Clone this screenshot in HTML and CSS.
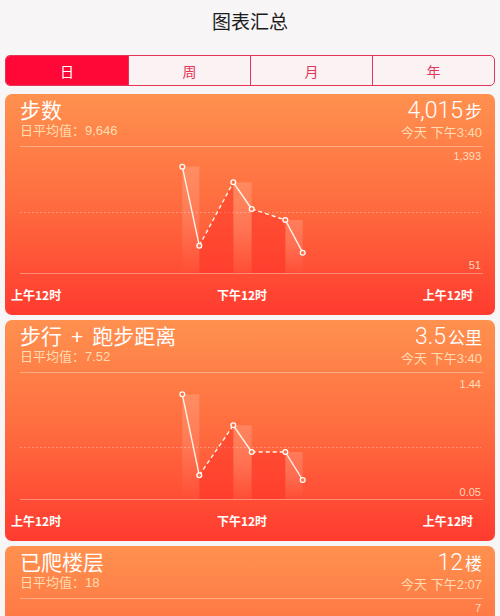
FILE: index.html
```html
<!DOCTYPE html>
<html lang="zh">
<head>
<meta charset="utf-8">
<title>图表汇总</title>
<link rel="stylesheet" href="styles.css">
</head>
<body>
<header class="topbar"><h1 class="title">图表汇总</h1></header>
<nav class="seg">
  <span class="seg-item active">日</span>
  <span class="seg-item">周</span>
  <span class="seg-item">月</span>
  <span class="seg-item">年</span>
</nav>
<main class="cards">
  <section class="card">
    <div class="card-head">
      <div class="head-left">
        <div class="card-title">步数</div>
        <div class="card-sub">日平均值：9,646</div>
      </div>
      <div class="head-right">
        <div class="card-value"><span class="num">4,015</span><span class="unit">步</span></div>
        <div class="card-sub">今天 下午3:40</div>
      </div>
    </div>
    <svg class="chart" width="490" height="128" viewBox="0 0 490 128">
      <defs>
        <linearGradient id="lg1" x1="0" y1="0" x2="0" y2="1">
          <stop offset="0" stop-color="#fff" stop-opacity="0.16"/>
          <stop offset="0.5" stop-color="#fff" stop-opacity="0.12"/>
          <stop offset="1" stop-color="#fff" stop-opacity="0"/>
        </linearGradient>
      </defs>
      <line class="rule" x1="15" y1="0.5" x2="478" y2="0.5"/>
      <line class="avg" x1="15" y1="66.5" x2="476" y2="66.5"/>
      <line class="rule" x1="15" y1="127.5" x2="478" y2="127.5"/>
      <rect x="177.3" y="20.7" width="17" height="107" fill="url(#lg1)"/>
      <rect x="228.3" y="36.3" width="18.4" height="91" fill="url(#lg1)"/>
      <rect x="280.3" y="74" width="17.4" height="53" fill="url(#lg1)"/>
      <polygon class="dark" points="194.3,99.7 228.3,36.3 228.3,127 194.3,127"/>
      <polygon class="dark" points="246.7,63 280.3,74 280.3,127 246.7,127"/>
      <line class="solid" x1="177.3" y1="20.7" x2="194.3" y2="99.7"/>
      <line class="dash" x1="194.3" y1="99.7" x2="228.3" y2="36.3"/>
      <line class="solid" x1="228.3" y1="36.3" x2="246.7" y2="63"/>
      <line class="dash" x1="246.7" y1="63" x2="280.3" y2="74"/>
      <line class="solid" x1="280.3" y1="74" x2="297.7" y2="106.7"/>
      <circle class="pt" cx="177.3" cy="20.7" r="2.4"/>
      <circle class="pt" cx="194.3" cy="99.7" r="2.4"/>
      <circle class="pt" cx="228.3" cy="36.3" r="2.4"/>
      <circle class="pt" cx="246.7" cy="63" r="2.4"/>
      <circle class="pt" cx="280.3" cy="74" r="2.4"/>
      <circle class="pt" cx="297.7" cy="106.7" r="2.4"/>
      <text class="lim" x="476" y="14">1,393</text>
      <text class="lim" x="476" y="123">51</text>
    </svg>
    <div class="axis"><span>上午12时</span><span>下午12时</span><span>上午12时</span></div>
  </section>

  <section class="card">
    <div class="card-head">
      <div class="head-left">
        <div class="card-title">步行<span class="plus">+</span>跑步距离</div>
        <div class="card-sub">日平均值：7.52</div>
      </div>
      <div class="head-right">
        <div class="card-value"><span class="num">3.5</span><span class="unit">公里</span></div>
        <div class="card-sub">今天 下午3:40</div>
      </div>
    </div>
    <svg class="chart" width="490" height="128" viewBox="0 0 490 128">
      <defs>
        <linearGradient id="lg2" x1="0" y1="0" x2="0" y2="1">
          <stop offset="0" stop-color="#fff" stop-opacity="0.16"/>
          <stop offset="0.5" stop-color="#fff" stop-opacity="0.12"/>
          <stop offset="1" stop-color="#fff" stop-opacity="0"/>
        </linearGradient>
      </defs>
      <line class="rule" x1="15" y1="0.5" x2="478" y2="0.5"/>
      <line class="avg" x1="15" y1="75.5" x2="476" y2="75.5"/>
      <line class="rule" x1="15" y1="127.5" x2="478" y2="127.5"/>
      <rect x="177.3" y="22.3" width="17" height="105" fill="url(#lg2)"/>
      <rect x="228.3" y="53.3" width="18.4" height="74" fill="url(#lg2)"/>
      <rect x="280.3" y="80" width="17.4" height="47" fill="url(#lg2)"/>
      <polygon class="dark" points="194.3,103.3 228.3,53.3 228.3,127 194.3,127"/>
      <polygon class="dark" points="246.7,80 280.3,80 280.3,127 246.7,127"/>
      <line class="solid" x1="177.3" y1="22.3" x2="194.3" y2="103.3"/>
      <line class="dash" x1="194.3" y1="103.3" x2="228.3" y2="53.3"/>
      <line class="solid" x1="228.3" y1="53.3" x2="246.7" y2="80"/>
      <line class="dash" x1="246.7" y1="80" x2="280.3" y2="80"/>
      <line class="solid" x1="280.3" y1="80" x2="297.7" y2="108"/>
      <circle class="pt" cx="177.3" cy="22.3" r="2.4"/>
      <circle class="pt" cx="194.3" cy="103.3" r="2.4"/>
      <circle class="pt" cx="228.3" cy="53.3" r="2.4"/>
      <circle class="pt" cx="246.7" cy="80" r="2.4"/>
      <circle class="pt" cx="280.3" cy="80" r="2.4"/>
      <circle class="pt" cx="297.7" cy="108" r="2.4"/>
      <text class="lim" x="476" y="16">1.44</text>
      <text class="lim" x="476" y="124">0.05</text>
    </svg>
    <div class="axis"><span>上午12时</span><span>下午12时</span><span>上午12时</span></div>
  </section>

  <section class="card">
    <div class="card-head">
      <div class="head-left">
        <div class="card-title">已爬楼层</div>
        <div class="card-sub">日平均值：18</div>
      </div>
      <div class="head-right">
        <div class="card-value"><span class="num">12</span><span class="unit">楼</span></div>
        <div class="card-sub">今天 下午2:07</div>
      </div>
    </div>
    <svg class="chart" width="490" height="128" viewBox="0 0 490 128">
      <line class="rule" x1="15" y1="0.5" x2="478" y2="0.5"/>
      <text class="lim" x="476" y="14">7</text>
    </svg>
  </section>
</main>
</body>
</html>
```

FILE: styles.css
```css
html, body {
  margin: 0;
  padding: 0;
  height: 616px;
  overflow: hidden;
}

body {
  background: #f7f5f5;
  font-family: "Noto Sans CJK SC", "Noto Sans", sans-serif;
}

.topbar {
  height: 55px;
}

.title {
  margin: 0;
  line-height: 42px;
  font-size: 19px;
  font-weight: 400;
  color: #1c1c1c;
  text-align: center;
}

.seg {
  display: grid;
  grid-template-columns: repeat(4, 1fr);
  height: 31px;
  margin: 0 5px;
  box-sizing: border-box;
  border: 1px solid #e3345a;
  border-radius: 5px;
  overflow: hidden;
  background: #fbf3f3;
}

.seg-item {
  display: flex;
  align-items: center;
  justify-content: center;
  font-size: 14px;
  color: #e3345a;
  border-left: 1px solid #e3345a;
}

.seg-item:first-child {
  border-left: none;
}

.seg-item.active {
  background: #ff0838;
  color: #fff;
}

.cards {
  display: flex;
  flex-direction: column;
  gap: 5px;
  padding: 8px 5px 0;
}

.card {
  flex-shrink: 0;
  height: 221px;
  border-radius: 7px;
  overflow: hidden;
  color: #fff;
  background: linear-gradient(180deg, #ff914f 0%, #ff6c3f 50%, #ff3b2f 100%);
}

.card-head {
  display: flex;
  justify-content: space-between;
  height: 52px;
  box-sizing: border-box;
  padding: 5px 13px 0 15px;
  font-family: "Liberation Sans", "Noto Sans CJK SC", sans-serif;
}

.card-title {
  font-size: 21px;
  line-height: 24px;
  white-space: nowrap;
}

.plus {
  margin: 0 9px;
}

.card-sub {
  font-size: 13px;
  line-height: 16px;
  color: rgba(255, 226, 186, 0.95);
  white-space: nowrap;
}

.head-right {
  text-align: right;
}

.card-value {
  line-height: 24px;
  white-space: nowrap;
}

.num {
  font-family: Roboto, "Liberation Sans", sans-serif;
  font-weight: 300;
  font-size: 23px;
}

.unit {
  font-size: 17px;
  margin-left: 2px;
}

.chart {
  display: block;
}

.rule {
  stroke: rgba(255, 255, 255, 0.35);
  stroke-width: 1;
}

.avg {
  stroke: rgba(255, 255, 255, 0.3);
  stroke-width: 1;
  stroke-dasharray: 2 2;
}

.dark {
  fill: rgba(255, 40, 35, 0.4);
}

.solid {
  stroke: #fff4e8;
  stroke-width: 1.4;
}

.dash {
  stroke: #fff4e8;
  stroke-width: 1.4;
  stroke-dasharray: 4 3;
}

.pt {
  fill: #ff7040;
  stroke: #fff;
  stroke-width: 1.3;
}

.lim {
  font-family: "Liberation Sans", sans-serif;
  font-size: 11px;
  fill: rgba(255, 232, 205, 0.9);
  text-anchor: end;
}

.axis {
  display: flex;
  justify-content: space-between;
  align-items: center;
  height: 41px;
  padding: 0 22px 0 6px;
  font-size: 12px;
  font-weight: 700;
  color: #fff;
}
```
